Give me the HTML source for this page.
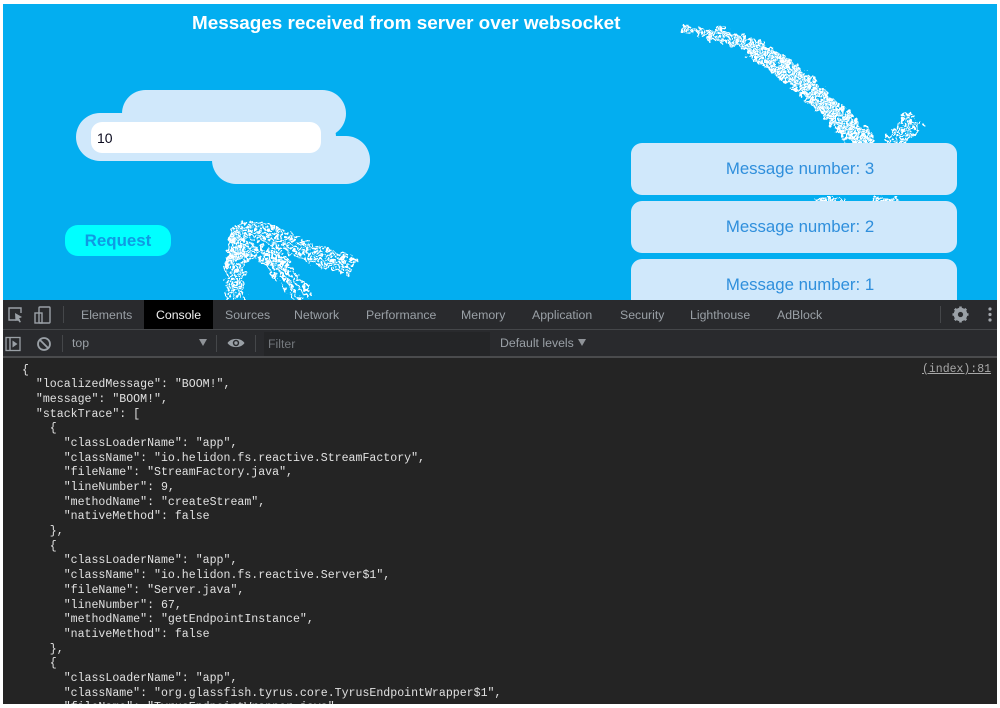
<!DOCTYPE html>
<html>
<head>
<meta charset="utf-8">
<style>
html,body{margin:0;padding:0;background:#fff;width:1000px;height:708px;overflow:hidden}
body{position:relative;font-family:"Liberation Sans",sans-serif}
.a{position:absolute;white-space:pre}
#top{position:absolute;left:3px;top:4px;width:994px;height:296px;background:#03aef0;overflow:hidden}
.c{position:absolute;background:#d0e8fb;border-radius:24px}
.m{position:absolute;left:631px;width:326px;height:52px;background:#d0e8fb;border-radius:11px;color:#2f8fdc;font-size:16.8px;line-height:52px;text-align:center;padding-left:12px;box-sizing:border-box}
.tab{position:absolute;top:300px;height:29px;line-height:30px;font-size:12.3px;color:#9aa0a6;white-space:pre}
#code{position:absolute;font:11.58px/14.68px "Liberation Mono",monospace;color:#e0e0e0;white-space:pre;margin:0}
</style>
</head>
<body>
<div id="top"></div>
<svg class="a" style="left:0;top:0" width="1000" height="300" viewBox="0 0 1000 300">
<defs>
<filter id="sp" filterUnits="userSpaceOnUse" x="150" y="0" width="800" height="320" color-interpolation-filters="sRGB">
<feTurbulence type="fractalNoise" baseFrequency="0.17" numOctaves="2" seed="4" result="n"/>
<feDisplacementMap in="SourceGraphic" in2="n" scale="13" xChannelSelector="R" yChannelSelector="G"/>
</filter>
<path id="a1" d="M682 28 C725 31 770 50 810 88 C830 108 850 128 872 147"/>
<path id="a2" d="M712 33 C745 40 780 60 810 88 C830 108 850 128 872 147"/>
<path id="a3" d="M752 47 C775 60 795 74 810 88 C830 108 850 128 872 147"/>
<path id="b1" d="M892 147 L904 130 L916 118"/>
<path id="c1" d="M232 298 L231 262 L234 236"/>
<path id="c2" d="M229 242 C240 222 268 232 290 244 C310 254 335 260 354 268"/>
<path id="c3" d="M230 242 C240 226 268 236 292 248"/>
<path id="c4" d="M268 250 C282 266 296 282 308 300"/>
</defs>
<g filter="url(#sp)" fill="none" stroke="#fff" stroke-width="2.9" stroke-linecap="round" stroke-dasharray="0 3.4 0 2.9 0 4.3 0 3.1">
<use href="#a1"/>
<use href="#a1" transform="translate(-1,3)" stroke-dashoffset="2"/>
<use href="#a2" transform="translate(1,-3)" stroke-dashoffset="1"/>
<use href="#a2" transform="translate(-2,5)" stroke-dashoffset="3"/>
<use href="#a2" transform="translate(2,-5)" stroke-dashoffset="5"/>
<use href="#a3" transform="translate(-4,7)" stroke-dashoffset="2"/>
<use href="#a3" transform="translate(4,-7)" stroke-dashoffset="4"/>
<use href="#a3" transform="translate(-5,9)" stroke-dashoffset="6"/>
<use href="#b1"/>
<use href="#b1" transform="translate(-3,-3)" stroke-dashoffset="2"/>
<use href="#b1" transform="translate(3,3)" stroke-dashoffset="3"/>
<use href="#b1" transform="translate(-6,-6)" stroke-dashoffset="5"/>
<use href="#b1" transform="translate(6,6)" stroke-dashoffset="1"/>
<use href="#c1"/>
<use href="#c1" transform="translate(-4,0)" stroke-dashoffset="2"/>
<use href="#c1" transform="translate(4,0)" stroke-dashoffset="4"/>
<use href="#c1" transform="translate(8,0)" stroke-dashoffset="1"/>
<use href="#c1" transform="translate(12,2)" stroke-dashoffset="3"/>
<use href="#c2"/>
<use href="#c2" transform="translate(1,-4)" stroke-dashoffset="2"/>
<use href="#c2" transform="translate(-1,4)" stroke-dashoffset="4"/>
<use href="#c2" transform="translate(2,-8)" stroke-dashoffset="1"/>
<use href="#c2" transform="translate(-2,8)" stroke-dashoffset="3"/>
<use href="#c3" transform="translate(-2,12)" stroke-dashoffset="2"/>
<use href="#c3" transform="translate(-2,16)" stroke-dashoffset="5"/>
<use href="#c3" transform="translate(-3,20)" stroke-dashoffset="1"/>
<use href="#c3" transform="translate(-3,24)" stroke-dashoffset="3"/>
<use href="#c4"/>
<use href="#c4" transform="translate(-5,3)" stroke-dashoffset="2"/>
<use href="#c4" transform="translate(5,-3)" stroke-dashoffset="4"/>
<use href="#c4" transform="translate(-10,6)" stroke-dashoffset="1"/>
<path d="M818 198 L844 198 M873 198 L898 198 M818 201 L844 201 M873 201 L898 201"/>
</g>
</svg>
<div class="a" style="left:192px;top:13px;font-size:18.9px;line-height:22px;font-weight:700;color:#fff">Messages received from server over websocket</div>

<div class="c" style="left:122px;top:90px;width:224px;height:47px"></div>
<div class="c" style="left:212px;top:136px;width:158px;height:48px"></div>
<div class="c" style="left:76px;top:113px;width:260px;height:48px"></div>
<div class="a" style="left:91px;top:122px;width:230px;height:31px;background:#fff;border-radius:11px"></div>
<div class="a" style="left:97px;top:129px;font-size:14px;line-height:18px;color:#0a0a1e">10</div>
<div class="a" style="left:65px;top:225px;width:106px;height:31px;background:#00ffff;border-radius:13px;text-align:center;font-size:16.9px;line-height:31px;font-weight:700;color:#0f9ae2">Request</div>

<div class="m" style="top:143px">Message number: 3</div>
<div class="m" style="top:201px">Message number: 2</div>
<div class="m" style="top:259px;height:41px;border-radius:11px 11px 0 0">Message number: 1</div>

<div class="a" style="left:3px;top:300px;width:994px;height:57px;background:#292a2d"></div>
<div class="a" style="left:3px;top:329px;width:994px;height:1px;background:#45474a"></div>
<div class="a" style="left:3px;top:356px;width:994px;height:2px;background:#4a4b4d"></div>
<div class="a" style="left:3px;top:358px;width:994px;height:346px;background:#242424;overflow:hidden">
<pre id="code" style="left:19px;top:5.500px">{
  "localizedMessage": "BOOM!",
  "message": "BOOM!",
  "stackTrace": [
    {
      "classLoaderName": "app",
      "className": "io.helidon.fs.reactive.StreamFactory",
      "fileName": "StreamFactory.java",
      "lineNumber": 9,
      "methodName": "createStream",
      "nativeMethod": false
    },
    {
      "classLoaderName": "app",
      "className": "io.helidon.fs.reactive.Server$1",
      "fileName": "Server.java",
      "lineNumber": 67,
      "methodName": "getEndpointInstance",
      "nativeMethod": false
    },
    {
      "classLoaderName": "app",
      "className": "org.glassfish.tyrus.core.TyrusEndpointWrapper$1",
      "fileName": "TyrusEndpointWrapper.java",
</pre>
</div>

<svg class="a" style="left:0;top:300px" width="60" height="58" viewBox="0 0 60 58" fill="none" stroke="#9aa0a6" stroke-width="1.4">
<path d="M20 20 H9 V8 H21 V13"/>
<path d="M15 13 L22 17 L19 18.5 L21 22 L19.5 22.5 L17.5 19.5 L15.5 21 Z" fill="#9aa0a6" stroke="none"/>
<rect x="39" y="7" width="11" height="16" rx="1"/>
<rect x="35" y="13" width="7" height="10"/>
<rect x="6" y="37.500" width="14" height="13" stroke-width="1.3"/>
<path d="M10 38 V50"/>
<path d="M12.500 40.500 L17.500 44 L12.500 47.500 Z" fill="#9aa0a6" stroke="none"/>
<circle cx="44" cy="44" r="6" stroke-width="1.800"/>
<path d="M40 40 L48 48" stroke-width="1.800"/>
</svg>
<div class="a" style="left:63px;top:306px;width:1px;height:17px;background:#45474a"></div>
<div class="a" style="left:62px;top:335px;width:1px;height:17px;background:#45474a"></div>
<div class="a" style="left:216px;top:335px;width:1px;height:17px;background:#45474a"></div>
<div class="a" style="left:255px;top:335px;width:1px;height:17px;background:#45474a"></div>
<div class="a" style="left:940px;top:306px;width:1px;height:17px;background:#45474a"></div>

<div class="a" style="left:144px;top:300px;width:69px;height:29px;background:#000"></div>
<div class="tab" style="left:81px">Elements</div>
<div class="tab" style="left:156px;color:#f1f1f1">Console</div>
<div class="tab" style="left:225px">Sources</div>
<div class="tab" style="left:294px">Network</div>
<div class="tab" style="left:366px">Performance</div>
<div class="tab" style="left:461px">Memory</div>
<div class="tab" style="left:532px">Application</div>
<div class="tab" style="left:620px">Security</div>
<div class="tab" style="left:690px">Lighthouse</div>
<div class="tab" style="left:777px">AdBlock</div>

<div class="tab" style="left:72px;top:330px;height:27px;line-height:27px">top</div>
<div class="a" style="left:199px;top:339px;width:0;height:0;border-left:4px solid transparent;border-right:4px solid transparent;border-top:7px solid #8f9398"></div>
<svg class="a" style="left:226px;top:336px" width="20" height="14" viewBox="0 0 20 14"><path d="M1.500 7 C5 1.500 15 1.500 18.500 7 C15 12.500 5 12.500 1.500 7 Z" fill="#9aa0a6"/><circle cx="10" cy="7" r="3.200" fill="#292a2d"/><circle cx="10" cy="7" r="1.700" fill="#9aa0a6"/></svg>
<div class="a" style="left:264px;top:332px;width:226px;height:24px;background:#242527"></div>
<div class="tab" style="left:268px;top:330px;height:27px;line-height:28px;color:#74787d">Filter</div>
<div class="tab" style="left:500px;top:330px;height:27px;line-height:27px">Default levels</div>
<div class="a" style="left:578px;top:339px;width:0;height:0;border-left:4px solid transparent;border-right:4px solid transparent;border-top:7px solid #8f9398"></div>

<svg class="a" style="left:950px;top:304px" width="46" height="22" viewBox="0 0 46 22">
<circle cx="10.500" cy="10.500" r="5.200" fill="none" stroke="#9aa0a6" stroke-width="3.200"/>
<path d="M10.500 2.500 V18.500 M2.500 10.500 H18.500 M4.800 4.800 L16.200 16.200 M16.200 4.800 L4.800 16.200" stroke="#9aa0a6" stroke-width="2.600"/>
<circle cx="10.500" cy="10.500" r="2.600" fill="#292a2d"/>
<circle cx="40" cy="5" r="1.600" fill="#a4a8ad"/><circle cx="40" cy="10.500" r="1.600" fill="#a4a8ad"/><circle cx="40" cy="16" r="1.600" fill="#a4a8ad"/>
</svg>
<div class="a" style="left:922px;top:362px;font:11.5px/15px 'Liberation Mono',monospace;color:#a8a8a8;text-decoration:underline">(index):81</div>
</body>
</html>
